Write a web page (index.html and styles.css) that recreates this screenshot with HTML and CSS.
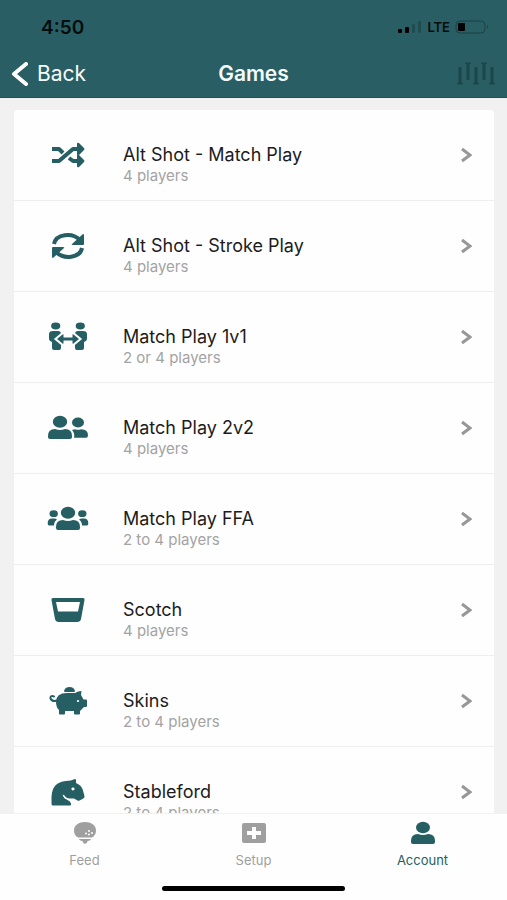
FILE: index.html
```html
<!DOCTYPE html>
<html lang="en">

<head>
    <meta charset="UTF-8">
    <meta name="viewport" content="width=device-width, initial-scale=1.0">
    <title>Games</title>
    <link rel="stylesheet" href="styles.css">
</head>

<body>

    <header class="header">
        <div class="status-bar">
            <span class="time">4:50</span>
            <div class="status-icons">
                <svg class="signal" viewBox="0 0 24 12" aria-hidden="true">
                    <rect x="0" y="8" width="4" height="4" rx="1" />
                    <rect x="7" y="6" width="4" height="6" rx="1" />
                    <rect class="weak" x="14" y="3" width="3" height="9" rx="1" />
                    <rect class="weak" x="20" y="0" width="3" height="12" rx="1" />
                </svg>
                <span class="network">LTE</span>
                <svg class="battery" viewBox="0 0 34 14" aria-hidden="true">
                    <rect class="shell" x="1" y="1" width="29" height="12" rx="4" />
                    <rect x="3" y="3" width="7" height="8" rx="1" />
                    <path class="tip" d="M32 5q2 2 0 4z" />
                </svg>
            </div>
        </div>

        <div class="nav-bar">
            <a class="back" href="#">
                <svg viewBox="0 0 17 24" aria-hidden="true"><path d="M15 2 3 12l12 10" /></svg>
                Back
            </a>
            <h1>Games</h1>
            <button class="tees" type="button" aria-label="Game options">
                <svg viewBox="0 0 40 24" aria-hidden="true">
                    <path d="M4 5v16M12 3v15M20 5v16M28 3v15M36 5v16" />
                    <path class="cap" d="M1 22q3-4 6 0zM17 22q3-4 6 0zM33 22q3-4 6 0zM9 1h6q-3 4-6 0zM25 1h6q-3 4-6 0z" />
                </svg>
            </button>
        </div>
    </header>

    <main class="content">
        <ul class="game-list">
            <li>
                <a class="game" href="#">
                    <svg class="icon" viewBox="0 0 42 30" aria-hidden="true">
                        <path class="line" d="M5 9h7l4 4M5 21h7L26 9h6M22 18l4 3h6" />
                        <path d="M30 4q0-2 2-1l5 5q1 1 0 2l-5 5q-2 1-2-1zM30 16q0-2 2-1l5 5q1 1 0 2l-5 5q-2 1-2-1z" />
                    </svg>
                    <div class="info">
                        <h2>Alt Shot - Match Play</h2>
                        <p>4 players</p>
                    </div>
                    <svg class="chevron" viewBox="0 0 12 16" aria-hidden="true"><path d="M2 2l8 6-8 6" /></svg>
                </a>
            </li>
            <li>
                <a class="game" href="#">
                    <svg class="icon" viewBox="0 0 42 30" aria-hidden="true">
                        <path class="line" d="M7 13C9 3 25 1 33 9M35 17C33 27 17 29 9 21" />
                        <path d="M36 3q1 0 1 1v9q0 1-1 1H26q-2 0-1-1zM6 27q-1 0-1-1v-9q0-1 1-1h10q2 0 1 1z" />
                    </svg>
                    <div class="info">
                        <h2>Alt Shot - Stroke Play</h2>
                        <p>4 players</p>
                    </div>
                    <svg class="chevron" viewBox="0 0 12 16" aria-hidden="true"><path d="M2 2l8 6-8 6" /></svg>
                </a>
            </li>
            <li>
                <a class="game" href="#">
                    <svg class="icon" viewBox="0 0 42 30" aria-hidden="true">
                        <ellipse cx="8.7" cy="4" rx="4.6" ry="3.4" />
                        <ellipse cx="33.3" cy="4" rx="4.6" ry="3.4" />
                        <path d="M6 9h5q3 0 3 3v14q0 2-2 2H7q-2 0-2-2v-6q-3-1-3-3v-5q0-3 4-3zM36 9h-5q-3 0-3 3v14q0 2 2 2h5q2 0 2-2v-6q3-1 3-3v-5q0-3-4-3z" />
                        <path class="outlined" d="M10 17l5.500-4.500q1-.5 1 .5v2.500h9V13q0-1 1-.5L32 17l-5.500 4.500q-1 .5-1-.5v-2.500h-9V21q0 1-1 .5z" />
                    </svg>
                    <div class="info">
                        <h2>Match Play 1v1</h2>
                        <p>2 or 4 players</p>
                    </div>
                    <svg class="chevron" viewBox="0 0 12 16" aria-hidden="true"><path d="M2 2l8 6-8 6" /></svg>
                </a>
            </li>
            <li>
                <a class="game" href="#">
                    <svg class="icon" viewBox="0 0 42 30" aria-hidden="true">
                        <ellipse cx="13" cy="8.700" rx="7.200" ry="6" />
                        <path d="M1 23q0-7 7-7 5 2 10 0 7 0 7 7v1q0 2-2 2H3q-2 0-2-2z" />
                        <ellipse cx="31" cy="9.500" rx="6" ry="5" />
                        <path d="M25 17l3-.8q3 1 6 0 7 0 7 6 0 2.500-2 2.500H27q1-4.500-2-7.700z" />
                    </svg>
                    <div class="info">
                        <h2>Match Play 2v2</h2>
                        <p>4 players</p>
                    </div>
                    <svg class="chevron" viewBox="0 0 12 16" aria-hidden="true"><path d="M2 2l8 6-8 6" /></svg>
                </a>
            </li>
            <li>
                <a class="game" href="#">
                    <svg class="icon" viewBox="0 0 42 30" aria-hidden="true">
                        <ellipse cx="21" cy="8.700" rx="7.200" ry="6" />
                        <path d="M9 23q0-7 7-7 5 2 10 0 7 0 7 7v1q0 2-2 2H11q-2 0-2-2z" />
                        <ellipse cx="6.700" cy="9.700" rx="4.200" ry="3.400" />
                        <ellipse cx="35.300" cy="9.700" rx="4.200" ry="3.400" />
                        <path d="M.7 19.500q0-5 4.300-5h3l2 1q-3 2-3 6H2q-1.300 0-1.300-2zM41.300 19.500q0-5-4.300-5h-3l-2 1q3 2 3 6h5q1.300 0 1.300-2z" />
                    </svg>
                    <div class="info">
                        <h2>Match Play FFA</h2>
                        <p>2 to 4 players</p>
                    </div>
                    <svg class="chevron" viewBox="0 0 12 16" aria-hidden="true"><path d="M2 2l8 6-8 6" /></svg>
                </a>
            </li>
            <li>
                <a class="game" href="#">
                    <svg class="icon" viewBox="0 0 42 30" aria-hidden="true">
                        <path fill-rule="evenodd" d="M6 3h30q2 0 1.500 2L34 24q-.5 3-4 3H12q-3.500 0-4-3L4.500 5Q4 3 6 3zm3 4 2 9.500h20L33 7z" />
                    </svg>
                    <div class="info">
                        <h2>Scotch</h2>
                        <p>4 players</p>
                    </div>
                    <svg class="chevron" viewBox="0 0 12 16" aria-hidden="true"><path d="M2 2l8 6-8 6" /></svg>
                </a>
            </li>
            <li>
                <a class="game" href="#">
                    <svg class="icon" viewBox="0 0 42 30" aria-hidden="true">
                        <path d="M17 5q1-4 5.500-4T28 5q0 1-1 1h-9q-1 0-1-1z" />
                        <path d="M20 7h8q3-2 6.500-2l-.5 4 2.500 4.500H39q1 0 1 1V20q0 1-1 1h-2l-4 4v2.500q0 1-1 1h-4q-1 0-1-1V25h-9v2.500q0 1-1 1h-4q-1 0-1-1V24Q9 21 9 16q0-9 11-9z" />
                        <path class="tail" d="M7 10.500Q3 9 3.500 12.500 5 16 10 14.500" />
                        <ellipse class="eye" cx="31" cy="15" rx="1.200" ry="1" />
                    </svg>
                    <div class="info">
                        <h2>Skins</h2>
                        <p>2 to 4 players</p>
                    </div>
                    <svg class="chevron" viewBox="0 0 12 16" aria-hidden="true"><path d="M2 2l8 6-8 6" /></svg>
                </a>
            </li>
            <li>
                <a class="game" href="#">
                    <svg class="icon" viewBox="0 0 42 30" aria-hidden="true">
                        <path d="M28 2q1 0 1 1v3q5 2 6.500 6l2 7q.5 2-2 3l-3 1.500q-1 .5-2 0L27 21.500h-4q-4 0-5.500-3l-2-1q1 4 5 5.500 3 1 3.500 3.500v1q0 1-1 1H6q-1.500 0-1.500-1.500V20Q5 5 19 4q5 0 9-2z" />
                        <ellipse class="eye" cx="26" cy="12" rx="1.600" ry="1.400" />
                    </svg>
                    <div class="info">
                        <h2>Stableford</h2>
                        <p>2 to 4 players</p>
                    </div>
                    <svg class="chevron" viewBox="0 0 12 16" aria-hidden="true"><path d="M2 2l8 6-8 6" /></svg>
                </a>
            </li>
        </ul>
    </main>

    <footer class="footer">
        <nav class="tabs">
            <a class="tab" href="#">
                <svg viewBox="0 0 26 24" aria-hidden="true">
                    <path d="M6 16.500Q2 14 2 9.500C2 4 7 1 13 1s11 3 11 8.500q0 4.500-4 7zM7 18h12q0 1.500-3 2-1 0-1 1.500-2 2.500-4 0 0-1.500-1-1.500-3-.5-3-2z" />
                    <g class="dimples">
                        <circle cx="17" cy="10" r="1" />
                        <circle cx="20" cy="12" r="1" />
                        <circle cx="17" cy="13.500" r="1" />
                        <circle cx="14" cy="12.500" r="1" />
                    </g>
                </svg>
                Feed
            </a>
            <a class="tab" href="#">
                <svg viewBox="0 0 26 24" aria-hidden="true">
                    <path fill-rule="evenodd" d="M3 2h20q2 0 2 2v16q0 2-2 2H3q-2 0-2-2V4q0-2 2-2zm8 4v4H6v4h5v4h4v-4h5v-4h-5V6z" />
                </svg>
                Setup
            </a>
            <a class="tab active" href="#">
                <svg viewBox="0 0 26 24" aria-hidden="true">
                    <ellipse cx="13" cy="6.500" rx="7" ry="5.700" />
                    <path d="M1 20q0-7 7-7 5 2 10 0 7 0 7 7v1q0 2-2 2H3q-2 0-2-2z" />
                </svg>
                Account
            </a>
        </nav>
        <div class="home-indicator"></div>
    </footer>

</body>

</html>
```
FILE: styles.css
```css
* {
    box-sizing: border-box;
}

body {
    display: flex;
    flex-direction: column;
    height: 100vh;
    margin: 0;
    background-color: #f1f1f2;
    color: #1c1c1c;
    font-family: Inter, "Liberation Sans", sans-serif;
}

a {
    color: inherit;
    text-decoration: none;
}

.header {
    flex: none;
    background-color: #295f64;
    border-bottom: 1px solid #1d5055;
}

.status-bar {
    display: flex;
    justify-content: space-between;
    align-items: center;
    height: 50px;
    padding: 4px 18px 0 41px;
    color: #050d0e;
}

.time {
    font-size: 19px;
    font-weight: 600;
}

.status-icons {
    display: flex;
    align-items: center;
    gap: 5px;
}

.signal {
    width: 24px;
    height: 12px;
}

.weak {
    fill: #1f4c50;
}

.network {
    font-size: 13px;
    font-weight: 600;
}

.battery {
    width: 34px;
    height: 14px;
}

.shell {
    fill: none;
    stroke: #1b4145;
}

.tip {
    fill: #1b4145;
}

.nav-bar {
    display: grid;
    grid-template-columns: 1fr auto 1fr;
    align-items: center;
    height: 47px;
    padding: 0 11px;
    color: #f4fafa;
}

.nav-bar h1 {
    margin: 0;
    font-size: 21px;
    font-weight: 600;
}

.back {
    display: flex;
    align-items: center;
    gap: 9px;
    font-size: 21px;
}

.back svg {
    width: 17px;
    height: 24px;
    fill: none;
    stroke: #ffffff;
    stroke-width: 4;
    stroke-linecap: round;
    stroke-linejoin: round;
}

.tees {
    justify-self: end;
    padding: 0;
    border: none;
    background: none;
    cursor: pointer;
}

.tees svg {
    display: block;
    width: 40px;
    height: 24px;
    fill: none;
    stroke: #1d464b;
    stroke-width: 3;
}

.tees .cap {
    fill: #1d464b;
    stroke-width: 1;
}

.content {
    flex: 1;
    min-height: 0;
    padding: 12px 13px 0 14px;
    overflow-y: auto;
    scrollbar-width: none;
}

.game-list {
    margin: 0;
    padding: 0;
    list-style: none;
    background-color: #fefefe;
    border-radius: 4px;
}

.game-list li {
    border-bottom: 1px solid #eeeeee;
}

.game {
    display: flex;
    align-items: center;
    height: 90px;
    padding: 0 22px 0 33px;
}

.icon {
    width: 42px;
    height: 30px;
    fill: #255e63;
}

.line {
    fill: none;
    stroke: #255e63;
    stroke-width: 4;
    stroke-linejoin: round;
}

.outlined {
    stroke: #fefefe;
    stroke-width: 4;
    paint-order: stroke;
}

.tail {
    fill: none;
    stroke: #255e63;
    stroke-width: 2;
    stroke-linecap: round;
}

.eye {
    fill: #fefefe;
}

.info {
    flex: 1;
    padding-top: 20px;
    margin-left: 34px;
}

.info h2 {
    margin: 0;
    font-size: 18px;
    font-weight: 400;
    line-height: 22px;
}

.info p {
    margin: 0;
    color: #a3a3a3;
    font-size: 15px;
    line-height: 20px;
}

.chevron {
    width: 12px;
    height: 16px;
    fill: none;
    stroke: #979797;
    stroke-width: 3;
}

.footer {
    flex: none;
    background-color: #fefefe;
    border-top: 1px solid #f1f1f1;
}

.tabs {
    display: flex;
    height: 72px;
    padding-top: 7px;
}

.tab {
    display: flex;
    flex: 1;
    flex-direction: column;
    align-items: center;
    gap: 7px;
    color: #9f9f9f;
    font-size: 13px;
    line-height: 16px;
}

.tab svg {
    width: 26px;
    height: 24px;
    fill: currentColor;
}

.tab.active {
    color: #255e63;
}

.dimples {
    fill: #fefefe;
}

.home-indicator {
    width: 36%;
    height: 5px;
    margin: 0 auto 9px;
    border-radius: 3px;
    background-color: #000000;
}
```
